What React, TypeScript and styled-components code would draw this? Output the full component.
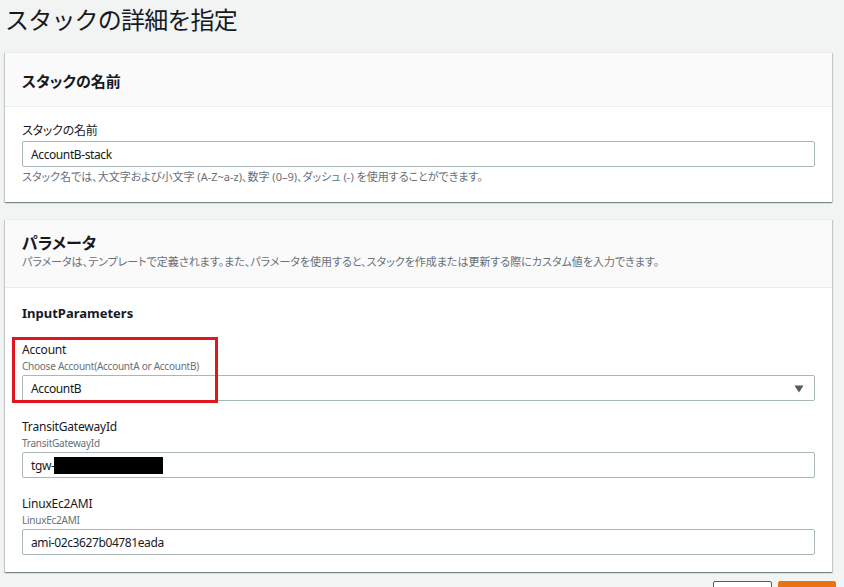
import React from 'react';
import styled, { createGlobalStyle } from 'styled-components';

const GlobalStyle = createGlobalStyle`
  html, body {
    margin: 0;
    padding: 0;
    overflow: hidden;
    background: #f2f3f3;
  }
  body {
    font-family: 'Noto Sans', 'Noto Sans CJK JP', sans-serif;
    color: #16191f;
    font-feature-settings: 'palt';
  }
`;

interface FieldType {
  label: string;
  description?: string;
  value: string;
  select?: boolean;
  redacted?: boolean;
  highlight?: boolean;
}

const fields: FieldType[] = [
  {
    label: 'Account',
    description: 'Choose Account(AccountA or AccountB)',
    value: 'AccountB',
    select: true,
    highlight: true,
  },
  {
    label: 'TransitGatewayId',
    description: 'TransitGatewayId',
    value: 'tgw-',
    redacted: true,
  },
  {
    label: 'LinuxEc2AMI',
    description: 'LinuxEc2AMI',
    value: 'ami-02c3627b04781eada',
  },
];

const App: React.FC = () => {
  return (
    <Page>
      <GlobalStyle />
      <Title>スタックの詳細を指定</Title>

      <Card>
        <CardHeader $compact>
          <CardTitle>スタックの名前</CardTitle>
        </CardHeader>
        <CardBody>
          <Label>スタックの名前</Label>
          <InputBox>AccountB-stack</InputBox>
          <Hint>
            スタック名では、大文字および小文字 (A-Z~a-z)、数字 (0–9)、ダッシュ (-) を使用することができます。
          </Hint>
        </CardBody>
      </Card>

      <Card>
        <CardHeader>
          <CardTitle $large>パラメータ</CardTitle>
          <HeaderDesc>
            パラメータは、テンプレートで定義されます。また、パラメータを使用すると、スタックを作成または更新する際にカスタム値を入力できます。
          </HeaderDesc>
        </CardHeader>
        <CardBody>
          <GroupTitle>InputParameters</GroupTitle>
          <FieldList>
            {fields.map((f) => (
              <Field key={f.label}>
                <Label>{f.label}</Label>
                <FieldDesc>{f.description}</FieldDesc>
                <InputBox>
                  {f.value}
                  {f.redacted && <Redacted />}
                  {f.select && (
                    <Caret viewBox='0 0 10 8' width='10' height='8'>
                      <path d='M0.5 0.5 L9.5 0.5 L5 7.5 Z' fill='#545b64' />
                    </Caret>
                  )}
                </InputBox>
                {f.highlight && <Highlight />}
              </Field>
            ))}
          </FieldList>
        </CardBody>
      </Card>

      <ButtonRow>
        <Button aria-label='前へ' />
        <Button aria-label='次へ' $primary />
      </ButtonRow>
    </Page>
  );
};

const Page = styled.div`
  width: 844px;
  padding: 0 12px 0 5px;
  box-sizing: border-box;
`;

const Title = styled.h1`
  margin: 0 0 12px;
  font-size: 24px;
  line-height: 40px;
  font-weight: 400;
  color: #16191f;
  letter-spacing: -0.8px;
  font-feature-settings: normal;
`;

const Card = styled.section`
  background: #ffffff;
  border-top: 1px solid #eaeded;
  box-shadow: 0 1px 1px 0 rgba(0, 28, 36, 0.3), 1px 1px 1px 0 rgba(0, 28, 36, 0.15),
    -1px 1px 1px 0 rgba(0, 28, 36, 0.15);
  margin-bottom: 17px;
`;

const CardHeader = styled.div<{ $compact?: boolean }>`
  background: #fafafa;
  border-bottom: 1px solid #eaeded;
  padding: ${(p) => (p.$compact ? '18px 17px 15px' : '13px 17px 17px')};
`;

const CardTitle = styled.h2<{ $large?: boolean }>`
  margin: 0;
  font-size: ${(p) => (p.$large ? '16px' : '15px')};
  line-height: ${(p) => (p.$large ? '21px' : '20px')};
  font-weight: 700;
`;

const HeaderDesc = styled.p`
  margin: 0;
  font-size: 11px;
  line-height: 16px;
  color: #687078;
`;

const CardBody = styled.div`
  padding: 15px 17px 17px;
`;

const GroupTitle = styled.h3`
  margin: 0 0 18px;
  font-size: 13px;
  line-height: 20px;
  font-weight: 700;
`;

const FieldList = styled.div`
  display: flex;
  flex-direction: column;
  gap: 17px;
`;

const Field = styled.div`
  position: relative;
  display: flex;
  flex-direction: column;
`;

const Label = styled.label`
  font-size: 12px;
  line-height: 18px;
  color: #16191f;
  display: block;
  margin-bottom: 1px;
  letter-spacing: -0.2px;
`;

const FieldDesc = styled.span`
  font-size: 10px;
  line-height: 15px;
  color: #687078;
  margin-top: -1px;
  margin-bottom: 1px;
  letter-spacing: -0.25px;
`;

const InputBox = styled.div`
  position: relative;
  height: 26px;
  box-sizing: border-box;
  border: 1px solid #aab7b8;
  border-radius: 2px;
  background: #ffffff;
  padding: 0 8px;
  display: flex;
  align-items: center;
  font-size: 12px;
  letter-spacing: -0.4px;
  color: #16191f;
`;

const Hint = styled.p`
  margin: 2px 0 0;
  font-size: 11px;
  line-height: 16px;
  color: #687078;
`;

const Redacted = styled.span`
  display: inline-block;
  width: 109px;
  height: 17px;
  background: #000000;
`;

const Caret = styled.svg`
  position: absolute;
  right: 10px;
  top: 9px;
`;

const Highlight = styled.div`
  position: absolute;
  left: -10px;
  top: -4px;
  width: 206px;
  height: 66px;
  box-sizing: border-box;
  border: 3px solid #e0161e;
  pointer-events: none;
`;

const ButtonRow = styled.div`
  display: flex;
  justify-content: flex-end;
  gap: 6px;
  margin-top: -8px;
  margin-right: -4px;
`;

const Button = styled.button<{ $primary?: boolean }>`
  width: ${(p) => (p.$primary ? '58px' : '59px')};
  height: 32px;
  border-radius: 2px;
  border: 1px solid ${(p) => (p.$primary ? '#ec7211' : '#545b64')};
  background: ${(p) => (p.$primary ? '#ec7211' : '#ffffff')};
  padding: 0;
`;

export default App;
